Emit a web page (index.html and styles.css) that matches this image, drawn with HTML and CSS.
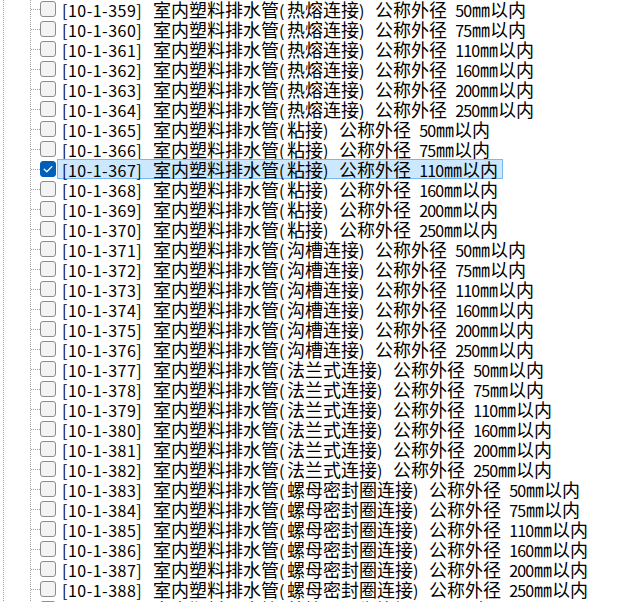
FILE: index.html
```html
<!DOCTYPE html>
<html lang="zh-CN">
<head>
<meta charset="utf-8">
<link rel="stylesheet" href="styles.css">
</head>
<body>
<div class="tree">
  <div class="level">
    <div class="row"><span class="conn"></span><span class="cb"></span><span class="label"><span class="code">[10-1-359]</span> 室内塑料排水管<span class="pa">(</span>热熔连接<span class="pa">)</span> 公称外径 <span class="n">50</span>㎜以内</span></div>
    <div class="row"><span class="conn"></span><span class="cb"></span><span class="label"><span class="code">[10-1-360]</span> 室内塑料排水管<span class="pa">(</span>热熔连接<span class="pa">)</span> 公称外径 <span class="n">75</span>㎜以内</span></div>
    <div class="row"><span class="conn"></span><span class="cb"></span><span class="label"><span class="code">[10-1-361]</span> 室内塑料排水管<span class="pa">(</span>热熔连接<span class="pa">)</span> 公称外径 <span class="n">110</span>㎜以内</span></div>
    <div class="row"><span class="conn"></span><span class="cb"></span><span class="label"><span class="code">[10-1-362]</span> 室内塑料排水管<span class="pa">(</span>热熔连接<span class="pa">)</span> 公称外径 <span class="n">160</span>㎜以内</span></div>
    <div class="row"><span class="conn"></span><span class="cb"></span><span class="label"><span class="code">[10-1-363]</span> 室内塑料排水管<span class="pa">(</span>热熔连接<span class="pa">)</span> 公称外径 <span class="n">200</span>㎜以内</span></div>
    <div class="row"><span class="conn"></span><span class="cb"></span><span class="label"><span class="code">[10-1-364]</span> 室内塑料排水管<span class="pa">(</span>热熔连接<span class="pa">)</span> 公称外径 <span class="n">250</span>㎜以内</span></div>
    <div class="row"><span class="conn"></span><span class="cb"></span><span class="label"><span class="code">[10-1-365]</span> 室内塑料排水管<span class="pa">(</span>粘接<span class="pa">)</span> 公称外径 <span class="n">50</span>㎜以内</span></div>
    <div class="row"><span class="conn"></span><span class="cb"></span><span class="label"><span class="code">[10-1-366]</span> 室内塑料排水管<span class="pa">(</span>粘接<span class="pa">)</span> 公称外径 <span class="n">75</span>㎜以内</span></div>
    <div class="row"><span class="conn"></span><span class="cb checked"><svg viewBox="0 0 16 16" width="16" height="16"><path d="M4.2 8.3 L6.8 10.8 L11.8 5.6" fill="none" stroke="#fff" stroke-width="1.3" stroke-linecap="round" stroke-linejoin="round"/></svg></span><span class="label selected"><span class="code">[10-1-367]</span> 室内塑料排水管<span class="pa">(</span>粘接<span class="pa">)</span> 公称外径 <span class="n">110</span>㎜以内</span></div>
    <div class="row"><span class="conn"></span><span class="cb"></span><span class="label"><span class="code">[10-1-368]</span> 室内塑料排水管<span class="pa">(</span>粘接<span class="pa">)</span> 公称外径 <span class="n">160</span>㎜以内</span></div>
    <div class="row"><span class="conn"></span><span class="cb"></span><span class="label"><span class="code">[10-1-369]</span> 室内塑料排水管<span class="pa">(</span>粘接<span class="pa">)</span> 公称外径 <span class="n">200</span>㎜以内</span></div>
    <div class="row"><span class="conn"></span><span class="cb"></span><span class="label"><span class="code">[10-1-370]</span> 室内塑料排水管<span class="pa">(</span>粘接<span class="pa">)</span> 公称外径 <span class="n">250</span>㎜以内</span></div>
    <div class="row"><span class="conn"></span><span class="cb"></span><span class="label"><span class="code">[10-1-371]</span> 室内塑料排水管<span class="pa">(</span>沟槽连接<span class="pa">)</span> 公称外径 <span class="n">50</span>㎜以内</span></div>
    <div class="row"><span class="conn"></span><span class="cb"></span><span class="label"><span class="code">[10-1-372]</span> 室内塑料排水管<span class="pa">(</span>沟槽连接<span class="pa">)</span> 公称外径 <span class="n">75</span>㎜以内</span></div>
    <div class="row"><span class="conn"></span><span class="cb"></span><span class="label"><span class="code">[10-1-373]</span> 室内塑料排水管<span class="pa">(</span>沟槽连接<span class="pa">)</span> 公称外径 <span class="n">110</span>㎜以内</span></div>
    <div class="row"><span class="conn"></span><span class="cb"></span><span class="label"><span class="code">[10-1-374]</span> 室内塑料排水管<span class="pa">(</span>沟槽连接<span class="pa">)</span> 公称外径 <span class="n">160</span>㎜以内</span></div>
    <div class="row"><span class="conn"></span><span class="cb"></span><span class="label"><span class="code">[10-1-375]</span> 室内塑料排水管<span class="pa">(</span>沟槽连接<span class="pa">)</span> 公称外径 <span class="n">200</span>㎜以内</span></div>
    <div class="row"><span class="conn"></span><span class="cb"></span><span class="label"><span class="code">[10-1-376]</span> 室内塑料排水管<span class="pa">(</span>沟槽连接<span class="pa">)</span> 公称外径 <span class="n">250</span>㎜以内</span></div>
    <div class="row"><span class="conn"></span><span class="cb"></span><span class="label"><span class="code">[10-1-377]</span> 室内塑料排水管<span class="pa">(</span>法兰式连接<span class="pa">)</span> 公称外径 <span class="n">50</span>㎜以内</span></div>
    <div class="row"><span class="conn"></span><span class="cb"></span><span class="label"><span class="code">[10-1-378]</span> 室内塑料排水管<span class="pa">(</span>法兰式连接<span class="pa">)</span> 公称外径 <span class="n">75</span>㎜以内</span></div>
    <div class="row"><span class="conn"></span><span class="cb"></span><span class="label"><span class="code">[10-1-379]</span> 室内塑料排水管<span class="pa">(</span>法兰式连接<span class="pa">)</span> 公称外径 <span class="n">110</span>㎜以内</span></div>
    <div class="row"><span class="conn"></span><span class="cb"></span><span class="label"><span class="code">[10-1-380]</span> 室内塑料排水管<span class="pa">(</span>法兰式连接<span class="pa">)</span> 公称外径 <span class="n">160</span>㎜以内</span></div>
    <div class="row"><span class="conn"></span><span class="cb"></span><span class="label"><span class="code">[10-1-381]</span> 室内塑料排水管<span class="pa">(</span>法兰式连接<span class="pa">)</span> 公称外径 <span class="n">200</span>㎜以内</span></div>
    <div class="row"><span class="conn"></span><span class="cb"></span><span class="label"><span class="code">[10-1-382]</span> 室内塑料排水管<span class="pa">(</span>法兰式连接<span class="pa">)</span> 公称外径 <span class="n">250</span>㎜以内</span></div>
    <div class="row"><span class="conn"></span><span class="cb"></span><span class="label"><span class="code">[10-1-383]</span> 室内塑料排水管<span class="pa">(</span>螺母密封圈连接<span class="pa">)</span> 公称外径 <span class="n">50</span>㎜以内</span></div>
    <div class="row"><span class="conn"></span><span class="cb"></span><span class="label"><span class="code">[10-1-384]</span> 室内塑料排水管<span class="pa">(</span>螺母密封圈连接<span class="pa">)</span> 公称外径 <span class="n">75</span>㎜以内</span></div>
    <div class="row"><span class="conn"></span><span class="cb"></span><span class="label"><span class="code">[10-1-385]</span> 室内塑料排水管<span class="pa">(</span>螺母密封圈连接<span class="pa">)</span> 公称外径 <span class="n">110</span>㎜以内</span></div>
    <div class="row"><span class="conn"></span><span class="cb"></span><span class="label"><span class="code">[10-1-386]</span> 室内塑料排水管<span class="pa">(</span>螺母密封圈连接<span class="pa">)</span> 公称外径 <span class="n">160</span>㎜以内</span></div>
    <div class="row"><span class="conn"></span><span class="cb"></span><span class="label"><span class="code">[10-1-387]</span> 室内塑料排水管<span class="pa">(</span>螺母密封圈连接<span class="pa">)</span> 公称外径 <span class="n">200</span>㎜以内</span></div>
    <div class="row"><span class="conn"></span><span class="cb"></span><span class="label"><span class="code">[10-1-388]</span> 室内塑料排水管<span class="pa">(</span>螺母密封圈连接<span class="pa">)</span> 公称外径 <span class="n">250</span>㎜以内</span></div>
    <div class="row"><span class="conn"></span><span class="cb"></span><span class="label"><span class="code">[10-1-389]</span> 室内塑料雨水管<span class="pa">(</span>粘接<span class="pa">)</span> 公称外径 <span class="n">50</span>㎜以内</span></div>
  </div>
</div>
</body>
</html>
```

FILE: styles.css
```css
html, body {
  margin: 0;
  padding: 0;
  background: #fff;
  height: 602px;
  overflow: hidden;
}
.tree {
  margin-left: 3px;
  margin-top: -1px;
  border-left: 1px dotted #a0a0a0;
  padding-left: 26px;
  font-family: "Noto Sans CJK SC", "Liberation Sans", sans-serif;
  color: #000;
}
.level {
  border-left: 1px dotted #a0a0a0;
}
.row {
  display: flex;
  align-items: center;
  height: 20px;
  white-space: nowrap;
}
.conn {
  width: 9px;
  height: 0;
  border-top: 1px dotted #a0a0a0;
}
.cb {
  box-sizing: border-box;
  width: 16px;
  height: 16px;
  border: 1px solid #8c8c8c;
  border-radius: 3px;
  background: #f3f3f3;
  flex: none;
  display: flex;
}
.cb.checked {
  background: #005fb8;
  border-color: #005fb8;
}
.cb svg {
  display: block;
  margin: -1px;
}
.label {
  box-sizing: border-box;
  height: 20px;
  line-height: 18px;
  padding: 0 4px 0 4px;
  margin-left: 1px;
  border: 1px solid transparent;
  font-size: 18px;
  word-spacing: 4px;
}
.code {
  display: inline-block;
  width: 80px;
  margin-right: 3px;
  font-size: 16px;
  letter-spacing: 0.5px;
  word-spacing: 0;
}
.pa {
  font-size: 16px;
  letter-spacing: 2.6px;
}
.n {
  font-size: 16px;
  letter-spacing: -0.85px;
  margin-right: 0.85px;
}
.label.selected {
  background: #cce8ff;
  border-color: #7ab8ee;
}
```
